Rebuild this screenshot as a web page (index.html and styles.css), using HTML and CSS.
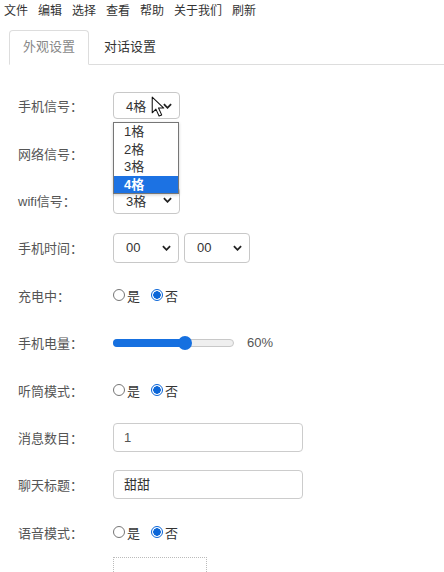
FILE: index.html
```html
<!DOCTYPE html>
<html lang="zh">
<head>
<meta charset="utf-8">
<link rel="stylesheet" href="styles.css">
</head>
<body>
<div class="menubar">
  <span>文件</span><span>编辑</span><span>选择</span><span>查看</span><span>帮助</span><span>关于我们</span><span>刷新</span>
</div>
<div class="tabs">
  <div class="tab active">外观设置</div>
  <div class="tab">对话设置</div>
</div>
<div class="form">
  <div class="row">
    <div class="label">手机信号：</div>
    <div class="select-wrap">
      <div class="select s-first"><span>4格</span><svg class="chev" viewBox="0 0 10 6" width="9" height="6"><path d="M1 1 L5 5 L9 1" fill="none" stroke="#222" stroke-width="2"/></svg></div>
      <svg class="cursor" viewBox="0 0 13 20" width="14" height="21"><path d="M1 1 L1 16 L4.5 12.5 L7.5 19 L10 18 L7 11.5 L12 11.5 Z" fill="#fff" stroke="#111" stroke-width="1" stroke-linejoin="round"/></svg>
      <div class="dropdown">
        <div class="opt">1格</div>
        <div class="opt">2格</div>
        <div class="opt">3格</div>
        <div class="opt sel">4格</div>
      </div>
    </div>
  </div>
  <div class="row">
    <div class="label">网络信号：</div>
  </div>
  <div class="row">
    <div class="label">wifi信号：</div>
    <div class="select s-first"><span>3格</span><svg class="chev" viewBox="0 0 10 6" width="9" height="6"><path d="M1 1 L5 5 L9 1" fill="none" stroke="#222" stroke-width="2"/></svg></div>
  </div>
  <div class="row">
    <div class="label">手机时间：</div>
    <div class="pair">
      <div class="select s-time"><span>00</span><svg class="chev" viewBox="0 0 10 6" width="9" height="6"><path d="M1 1 L5 5 L9 1" fill="none" stroke="#222" stroke-width="2"/></svg></div>
      <div class="select s-time"><span>00</span><svg class="chev" viewBox="0 0 10 6" width="9" height="6"><path d="M1 1 L5 5 L9 1" fill="none" stroke="#222" stroke-width="2"/></svg></div>
    </div>
  </div>
  <div class="row">
    <div class="label">充电中：</div>
    <div class="radios">
      <span class="radio"><i class="dot"></i>是</span>
      <span class="radio"><i class="dot on"></i>否</span>
    </div>
  </div>
  <div class="row">
    <div class="label">手机电量：</div>
    <div class="slider">
      <div class="track"><div class="fill" style="width:60%"></div><div class="thumb" style="left:60%"></div></div>
      <span class="pct">60%</span>
    </div>
  </div>
  <div class="row">
    <div class="label">听筒模式：</div>
    <div class="radios">
      <span class="radio"><i class="dot"></i>是</span>
      <span class="radio"><i class="dot on"></i>否</span>
    </div>
  </div>
  <div class="row">
    <div class="label">消息数目：</div>
    <div class="input">1</div>
  </div>
  <div class="row">
    <div class="label">聊天标题：</div>
    <div class="input dark">甜甜</div>
  </div>
  <div class="row">
    <div class="label">语音模式：</div>
    <div class="radios">
      <span class="radio"><i class="dot"></i>是</span>
      <span class="radio"><i class="dot on"></i>否</span>
    </div>
  </div>
  <div class="box"></div>
</div>
</body>
</html>
```
FILE: styles.css
```css
html, body {
  margin: 0;
  padding: 0;
  background: #fff;
  overflow: hidden;
}
body {
  font-family: "Liberation Sans", "Noto Sans CJK SC", sans-serif;
  font-size: 13px;
  color: #555;
}
.menubar {
  display: flex;
  gap: 10px;
  padding-left: 4px;
  height: 22px;
  line-height: 22px;
  font-size: 12px;
  color: #333;
}
.tabs {
  display: flex;
  margin-top: 8px;
  margin-left: 9px;
  border-bottom: 1px solid #ddd;
  height: 34px;
}
.tab {
  padding: 0 14px 0 14px;
  line-height: 32px;
  font-size: 13px;
  color: #333;
  border: 1px solid transparent;
  border-radius: 4px 4px 0 0;
  margin-bottom: -1px;
}
.tab.active {
  color: #888;
  border-color: #ddd;
  border-bottom-color: #fff;
  background: #fff;
  padding: 0 13px;
}
.tab + .tab {
  padding-left: 14px;
}
.form {
  padding-top: 17px;
}
.row {
  display: flex;
  align-items: center;
  height: 47.4px;
}
.label {
  width: 95px;
  padding-left: 18px;
  flex: none;
}
.select-wrap {
  position: relative;
}
.select {
  box-sizing: border-box;
  display: flex;
  align-items: center;
  justify-content: space-between;
  border: 1px solid #c8c8c8;
  border-radius: 4px;
  background: #fff;
  color: #333;
  padding: 0 7px 0 12px;
}
.s-first {
  width: 67px;
  height: 27px;
}
.s-time {
  width: 66px;
  height: 30px;
}
.pair {
  display: flex;
  gap: 5px;
}
.chev {
  display: block;
}
.cursor {
  position: absolute;
  left: 38px;
  top: 4px;
}
.dropdown {
  position: absolute;
  left: 0;
  top: 30px;
  width: 66px;
  box-sizing: border-box;
  border: 1px solid #767676;
  background: #fff;
  box-shadow: 0 1px 3px rgba(0,0,0,0.2);
  z-index: 2;
}
.opt {
  height: 17.5px;
  line-height: 17.5px;
  padding-left: 10px;
  color: #333;
  font-size: 13px;
}
.opt.sel {
  background: #1c72e3;
  color: #fff;
  font-weight: bold;
}
.radios {
  display: flex;
  gap: 11px;
  color: #333;
}
.radio {
  display: flex;
  align-items: center;
  gap: 2px;
}
.dot {
  box-sizing: border-box;
  display: block;
  width: 12px;
  height: 12px;
  border: 1px solid #767676;
  border-radius: 50%;
}
.dot.on {
  border: 1px solid #0b66d8;
  background: radial-gradient(circle, #0b66d8 0 3.5px, #fff 4px);
}
.slider {
  display: flex;
  align-items: center;
}
.track {
  position: relative;
  width: 121px;
  height: 8px;
  box-sizing: border-box;
  border: 1px solid #c8c8c8;
  background: #efefef;
  border-radius: 4px;
}
.fill {
  position: absolute;
  left: -1px;
  top: -1px;
  bottom: -1px;
  background: #1670e0;
  border-radius: 4px 0 0 4px;
}
.thumb {
  position: absolute;
  top: 50%;
  width: 14px;
  height: 14px;
  margin: -7px 0 0 -7px;
  border-radius: 50%;
  background: #1670e0;
}
.pct {
  margin-left: 13px;
  color: #555;
}
.input {
  box-sizing: border-box;
  width: 190px;
  height: 29px;
  border: 1px solid #ccc;
  border-radius: 4px;
  padding-left: 10px;
  line-height: 27px;
  color: #555;
}
.input.dark {
  color: #333;
}
.box {
  margin-left: 113px;
  margin-top: 1px;
  width: 92px;
  height: 40px;
  border: 1px dotted #bbb;
  border-bottom: none;
}
```
